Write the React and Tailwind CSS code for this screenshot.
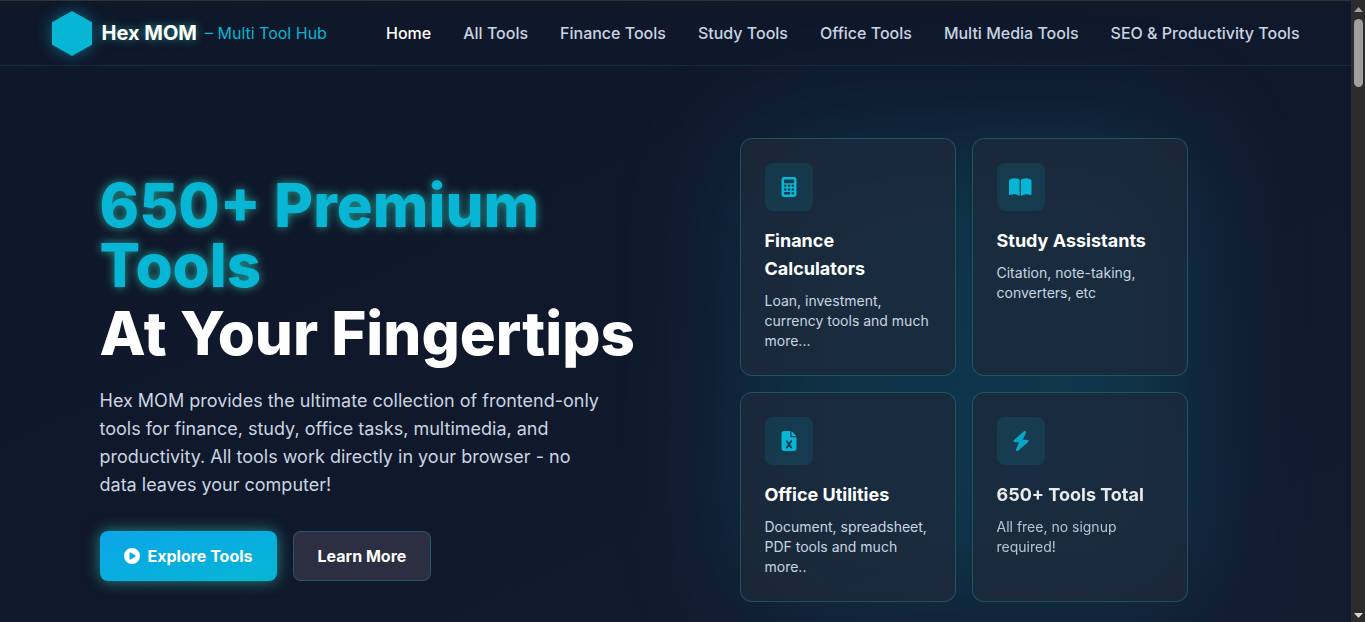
import React from "react";
import { FaBolt, FaCalculator, FaCirclePlay, FaFileExcel } from "react-icons/fa6";

const links = [
  "Home",
  "All Tools",
  "Finance Tools",
  "Study Tools",
  "Office Tools",
  "Multi Media Tools",
  "SEO & Productivity Tools",
];

function BookOpen(props) {
  return (
    <svg viewBox="0 0 576 512" fill="currentColor" {...props}>
      <path d="M144.300 32.040C106.900 31.290 63.700 41.440 18.600 61.290c-11.420 5.026-18.600 16.670-18.600 29.150l0 357.600c0 11.550 11.990 19.550 22.450 14.650c126.300-59.140 219.800 11 223.800 14.010C249.100 478.900 252.500 480 256 480c12.400 0 16-11.380 16-15.980V80.040c0-5.203-2.531-10.080-6.781-13.080C263.300 65.580 216.700 33.350 144.300 32.040zM557.400 61.290c-45.110-19.790-88.480-29.610-125.700-29.260c-72.440 1.312-118.100 33.550-120.900 34.920C306.500 69.960 304 74.830 304 80.040v383.100C304 468.400 307.500 480 320 480c3.484 0 6.938-1.125 9.781-3.328c3.925-3.018 97.440-73.160 223.800-14c10.460 4.896 22.450-3.105 22.450-14.650l0-357.600C575.100 77.970 568.800 66.310 557.400 61.290z" />
    </svg>
  );
}

const cards = [
  {
    icon: FaCalculator,
    title: "Finance Calculators",
    text: "Loan, investment, currency tools and much more...",
  },
  {
    icon: BookOpen,
    title: "Study Assistants",
    text: "Citation, note-taking, converters, etc",
  },
  {
    icon: FaFileExcel,
    title: "Office Utilities",
    text: "Document, spreadsheet, PDF tools and much more..",
  },
  {
    icon: FaBolt,
    title: "650+ Tools Total",
    text: "All free, no signup required!",
    dim: true,
  },
];

function Header() {
  return (
    <header className="border-y border-t-[#333136] border-b-[#122c3b]">
      <div className="mx-auto flex h-16 max-w-7xl items-center justify-between px-4">
        <a href="#home" className="flex shrink-0 items-center">
          <svg
            viewBox="0 0 40 45"
            className="mr-2.5 h-[45px] w-10 overflow-visible drop-shadow-[0_0_8px_rgba(6,182,212,0.5)]"
            aria-hidden="true"
          >
            <path d="M20 0 40 11.25V33.75L20 45 0 33.75V11.25Z" fill="#06b6d4" />
          </svg>
          <span className="text-xl font-bold text-white [text-shadow:0_0_10px_rgba(45,212,191,0.6)]">
            Hex MOM
          </span>
          <span className="ml-2 text-base text-[#06b6d4]">– Multi Tool Hub</span>
        </a>
        <nav className="flex gap-8 whitespace-nowrap">
          {links.map((label, i) => (
            <a
              key={label}
              href="#tools"
              className={i === 0 ? "font-medium text-white" : "font-medium text-slate-300"}
            >
              {label}
            </a>
          ))}
        </nav>
      </div>
    </header>
  );
}

function Card({ icon: Icon, title, text, dim }) {
  return (
    <article className="rounded-xl border border-[#2dd4bf]/25 bg-[#1e293b]/75 p-6">
      <div className={dim ? "opacity-90" : ""}>
        <div className="mb-4 flex size-12 items-center justify-center rounded-lg bg-[#06b6d4]/12">
          <Icon className="h-5 w-auto text-[#06b6d4]" aria-hidden="true" />
        </div>
        <h3 className="mb-2 text-lg leading-7 font-bold text-white">{title}</h3>
        <p className="text-sm leading-5 text-slate-300">{text}</p>
      </div>
    </article>
  );
}

function Hero() {
  return (
    <main className="mx-auto grid max-w-7xl grid-cols-2 items-center px-16 pt-[72px]">
      <section>
        <h1 className="mb-6 text-6xl leading-none font-extrabold text-white">
          <span className="mb-2 block text-[#06b6d4] [text-shadow:0_0_10px_rgba(45,212,191,0.7)]">
            650+ Premium Tools
          </span>
          <span className="block whitespace-nowrap">At Your Fingertips</span>
        </h1>
        <p className="mb-8 max-w-lg text-lg leading-7 text-slate-300">
          Hex MOM provides the ultimate collection of frontend-only tools for
          finance, study, office tasks, multimedia, and productivity. All tools
          work directly in your browser - no data leaves your computer!
        </p>
        <div className="flex gap-4">
          <button
            type="button"
            className="flex h-[50px] items-center gap-2 rounded-lg bg-linear-to-br from-[#0ea5e9] to-[#06b6d4] px-6 font-bold text-white shadow-[0_0_15px_rgba(45,212,191,0.6)]"
          >
            <FaCirclePlay className="size-4" aria-hidden="true" />
            Explore Tools
          </button>
          <button
            type="button"
            className="flex h-[50px] items-center rounded-lg border border-[#22d3ee]/25 bg-[#2b2f41] px-6 font-bold text-white"
          >
            Learn More
          </button>
        </div>
      </section>
      <section className="pb-4">
        <div className="relative mx-auto max-w-md">
          <div className="absolute inset-0 rounded-xl bg-linear-to-r from-[#0891b2] to-[#06b6d4] opacity-20 blur-3xl" />
          <div className="relative grid grid-cols-2 gap-4">
            {cards.map((card) => (
              <Card key={card.title} {...card} />
            ))}
          </div>
        </div>
      </section>
    </main>
  );
}

function ScrollRail() {
  return (
    <div
      className="flex w-3.5 shrink-0 flex-col items-center justify-between bg-[#2c2c2c] pt-[7px] pb-1"
      aria-hidden="true"
    >
      <div className="flex flex-col items-center gap-[7px]">
        <svg viewBox="0 0 9 5" className="h-[5px] w-[9px]">
          <path d="M4.500 0 9 5H0Z" fill="#a0a0a0" />
        </svg>
        <div className="h-[68px] w-[9px] rounded-full bg-[#9f9f9f]" />
      </div>
      <svg viewBox="0 0 9 5" className="h-[5px] w-[9px]">
        <path d="M0 0H9L4.500 5Z" fill="#d6d6d6" />
      </svg>
    </div>
  );
}

export default function App() {
  return (
    <div className="flex h-screen overflow-hidden bg-[#0f172a] font-['Inter',sans-serif]">
      <div className="min-w-0 flex-1 overflow-hidden bg-linear-to-br from-[#0f172a] via-[#10182b] to-[#131b2f]">
        <Header />
        <Hero />
      </div>
      <ScrollRail />
    </div>
  );
}
